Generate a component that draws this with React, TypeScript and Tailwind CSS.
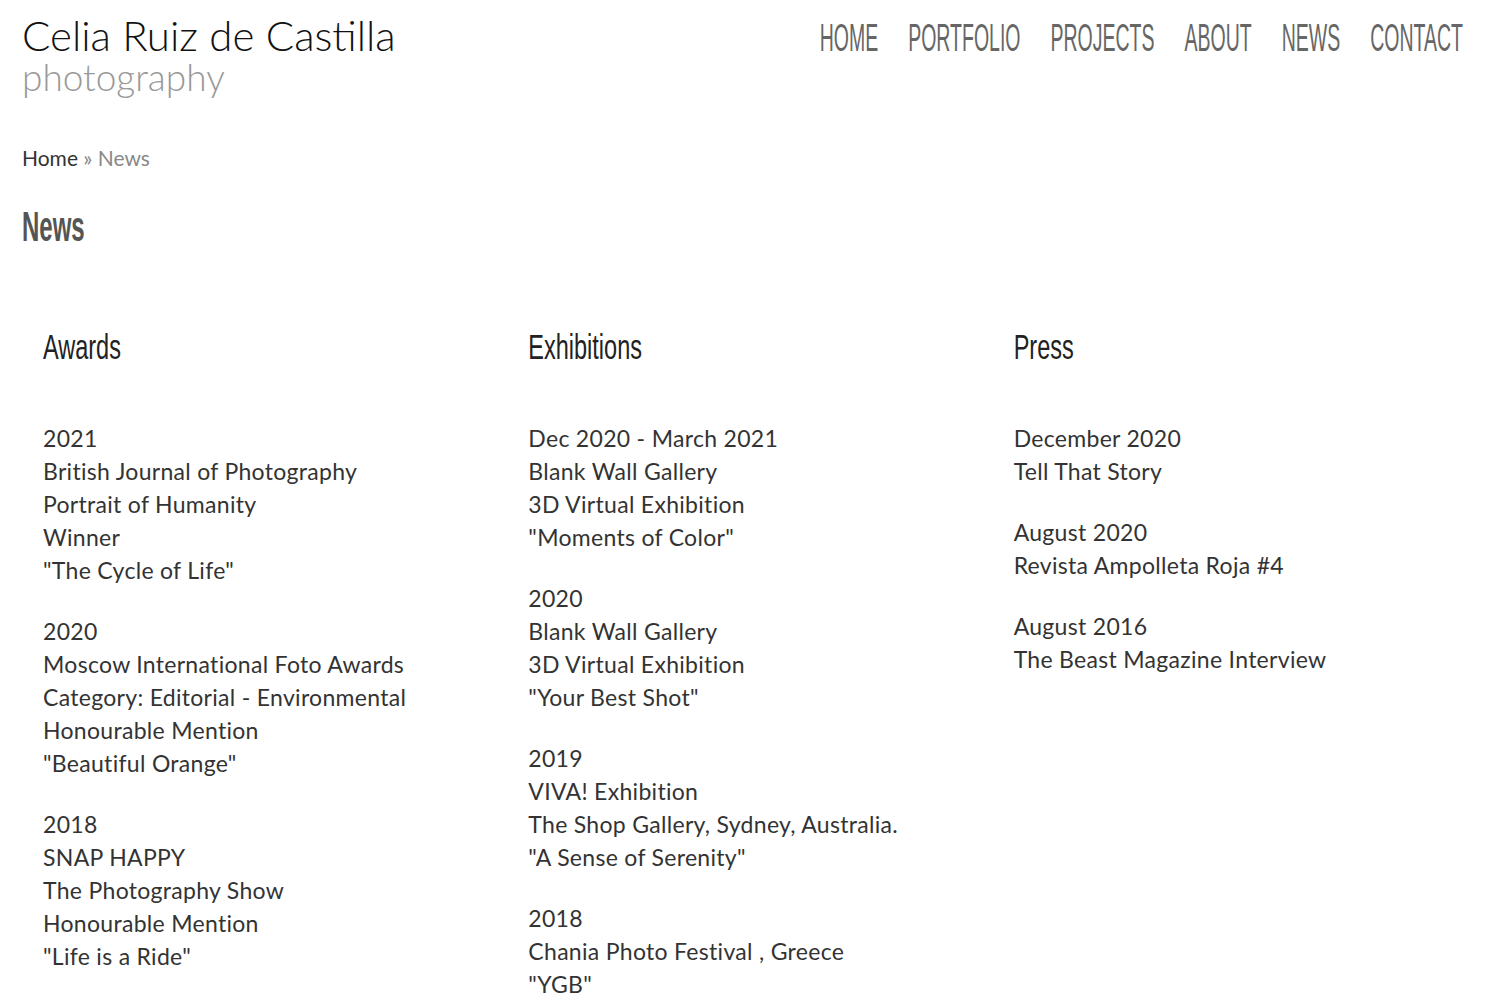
import React from "react";

const nav = ["HOME", "PORTFOLIO", "PROJECTS", "ABOUT", "NEWS", "CONTACT"];

const columns: { title: string; entries: string[][] }[] = [
    {
        title: "Awards",
        entries: [
            ["2021", "British Journal of Photography", "Portrait of Humanity", "Winner", "\"The Cycle of Life\""],
            ["2020", "Moscow International Foto Awards", "Category: Editorial - Environmental", "Honourable Mention", "\"Beautiful Orange\""],
            ["2018", "SNAP HAPPY", "The Photography Show", "Honourable Mention", "\"Life is a Ride\""],
        ],
    },
    {
        title: "Exhibitions",
        entries: [
            ["Dec 2020 - March 2021", "Blank Wall Gallery", "3D Virtual Exhibition", "\"Moments of Color\""],
            ["2020", "Blank Wall Gallery", "3D Virtual Exhibition", "\"Your Best Shot\""],
            ["2019", "VIVA! Exhibition", "The Shop Gallery, Sydney, Australia.", "\"A Sense of Serenity\""],
            ["2018", "Chania Photo Festival , Greece", "\"YGB\""],
        ],
    },
    {
        title: "Press",
        entries: [
            ["December 2020", "Tell That Story"],
            ["August 2020", "Revista Ampolleta Roja #4"],
            ["August 2016", "The Beast Magazine Interview"],
        ],
    },
];

export default function App() {
    return (
        <div className="min-h-[1000px] w-full bg-white font-['Lato',sans-serif]">
            <header className="flex items-start justify-between px-[22px] pt-[13px]">
                <div className="font-light">
                    <div className="text-[42px] leading-[44px] text-[#111]">Celia Ruiz de Castilla</div>
                    <div className="text-[37px] leading-[40px] text-[#999]">photography</div>
                </div>
                <nav className="mr-[15px] mt-[6px] flex gap-[30px]">
                    {nav.map((item) => (
                        <span
                            key={item}
                            className="inline-block origin-center scale-y-[1.95] font-['Liberation_Sans_Narrow',sans-serif] text-[19.5px] font-normal leading-[36px] text-[#666]"
                        >
                            {item}
                        </span>
                    ))}
                </nav>
            </header>

            <main className="px-[22px]">
                <div className="mt-[46px] text-[21px] leading-[30px]">
                    <span className="text-[#333]">Home</span>
                    <span className="text-[#888]"> » News</span>
                </div>

                <h1 className="mt-[34px] h-[40px] font-['Liberation_Sans_Narrow',sans-serif] text-[24px] font-bold leading-[40px] text-[#555]">
                    <span className="inline-block scale-y-[1.8]">News</span>
                </h1>

                <div className="mt-[80px] grid grid-cols-3">
                    {columns.map((col) => (
                        <section key={col.title} className="px-[21px]">
                            <h2 className="h-[40px] font-['Liberation_Sans_Narrow',sans-serif] text-[23.5px] font-normal leading-[40px] text-[#222]">
                                <span className="inline-block scale-y-[1.5]">{col.title}</span>
                            </h2>
                            <div className="mt-[55px] flex flex-col gap-[28px]">
                                {col.entries.map((entry, i) => (
                                    <div key={i} className="text-[23px] leading-[33px] tracking-[0.3px] text-[#333]">
                                        {entry.map((line) => (
                                            <div key={line}>{line}</div>
                                        ))}
                                    </div>
                                ))}
                            </div>
                        </section>
                    ))}
                </div>
            </main>
        </div>
    );
}
